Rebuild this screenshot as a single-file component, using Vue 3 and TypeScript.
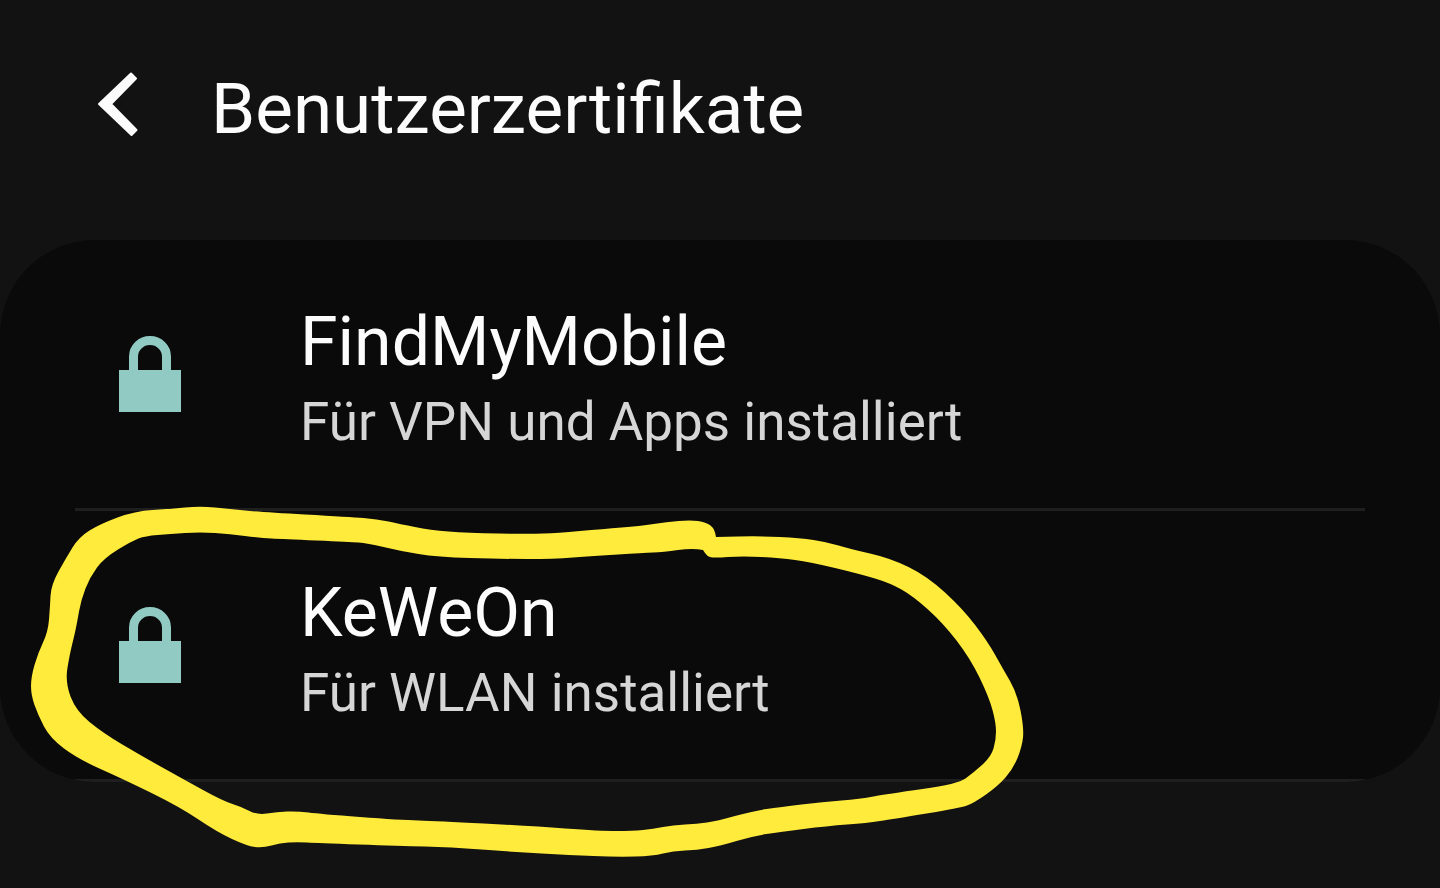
<script setup lang="ts">
type Point = [number, number]

interface Certificate {
  name: string
  usage: string
}

const certificates: Certificate[] = [
  { name: 'FindMyMobile', usage: 'Für VPN und Apps installiert' },
  { name: 'KeWeOn', usage: 'Für WLAN installiert' },
]

// Outer edge of the marker stroke; starts and ends where the stroke overlaps itself.
const outerEdge: Point[] = [
  [716, 537], [715, 529], [706, 522], [690, 520], [667, 522], [640, 526], [603, 529], [557, 533],
  [530, 534], [467, 533], [430, 530], [400, 524], [377, 519], [350, 517], [260, 512], [230, 509],
  [200, 506], [170, 509], [135, 511], [100, 524], [79, 537], [66, 558], [51, 585], [50, 607],
  [48, 632], [38, 653], [31, 677], [31, 695], [38, 715], [50, 738], [78, 759], [123, 779],
  [180, 807], [217, 832], [247, 846], [263, 848], [280, 843], [297, 842], [317, 843], [400, 846],
  [450, 847], [513, 852], [570, 855], [617, 857], [653, 856], [673, 851], [697, 850], [720, 846],
  [753, 836], [780, 832], [827, 826], [867, 823], [893, 819], [960, 808], [974, 803], [998, 786],
  [1013, 769], [1022, 747], [1024, 728], [1017, 693], [1003, 669], [988, 642], [963, 609],
  [927, 576], [890, 558], [850, 549], [827, 542], [800, 538], [760, 536], [716, 537],
]

const innerEdge: Point[] = [
  [703, 550], [693, 548], [663, 552], [643, 553], [593, 556], [553, 559], [503, 559], [437, 557],
  [400, 551], [367, 543], [350, 542], [283, 539], [260, 538], [230, 534], [200, 532], [170, 534],
  [145, 536], [132, 541], [104, 558], [90, 577], [81, 600], [77, 623], [74, 637], [70, 653],
  [65, 682], [76, 711], [103, 733], [140, 755], [183, 779], [223, 801], [242, 807], [257, 815],
  [277, 812], [297, 811], [320, 814], [400, 820], [437, 821], [530, 826], [600, 831], [633, 831],
  [653, 829], [673, 825], [697, 824], [717, 821], [753, 811], [780, 807], [823, 802], [860, 799],
  [887, 794], [958, 784], [973, 773], [991, 757], [996, 740], [996, 723], [989, 697], [970, 658],
  [943, 623], [913, 596], [890, 583], [860, 574], [810, 562], [780, 558], [743, 556], [713, 558],
  [707, 556], [703, 550],
]

// Rounds a closed outline: each inner point steers a curve between its neighbouring midpoints.
function smooth(points: Point[]): string {
  let d = `M${points[0][0]} ${points[0][1]}`
  for (let i = 1; i < points.length - 1; i++) {
    const [x, y] = points[i]
    const [nx, ny] = points[i + 1]
    d += `Q${x} ${y} ${(x + nx) / 2} ${(y + ny) / 2}`
  }
  return d + 'Z'
}

const markerPath = smooth(outerEdge) + smooth(innerEdge)
</script>

<template>
  <main class="screen">
    <header class="bar">
      <button class="back" type="button" aria-label="Zurück">
        <svg viewBox="0 0 84 84" aria-hidden="true">
          <path d="M24 37 56 6.500 61 11.500 36 37 61.500 63 56.500 68Z" />
        </svg>
      </button>
      <h1 class="title">Benutzerzertifikate</h1>
    </header>

    <section class="content">
      <ul class="card">
        <li v-for="cert in certificates" :key="cert.name" class="row">
          <svg class="lock" viewBox="0 0 150 160" aria-hidden="true">
            <path class="shackle" d="M58.500 70V54.500a16.500 16 0 0 1 33 0V70" />
            <path class="body" d="M44 68h62v42H44z" />
          </svg>
          <div class="text">
            <h2 class="name">{{ cert.name }}</h2>
            <p class="usage">{{ cert.usage }}</p>
          </div>
        </li>
      </ul>
      <svg class="marker" viewBox="0 500 1040 360" aria-hidden="true">
        <path :d="markerPath" fill-rule="evenodd" />
      </svg>
    </section>
  </main>
</template>

<style>
body {
  margin: 0;
  background: #121212;
}
</style>

<style scoped>
.screen {
  min-height: 100vh;
  background: #121212;
  color: #fcfcfc;
  font-family: Roboto, "Liberation Sans", sans-serif;
}

.bar {
  display: flex;
  align-items: center;
  gap: 52px;
  padding: 67px 75px 89px;
}

.back {
  width: 84px;
  height: 84px;
  padding: 0;
  border: 0;
  background: none;
  cursor: pointer;
}

.back svg {
  display: block;
  width: 84px;
  height: 84px;
  fill: #fcfcfc;
  stroke: #fcfcfc;
  stroke-width: 2;
  stroke-linejoin: round;
}

.title {
  margin: 0;
  font-size: 71px;
  font-weight: 400;
  line-height: 84px;
}

.content {
  position: relative;
}

.card {
  margin: 0;
  padding: 0 75px;
  overflow: hidden;
  border-radius: 95px;
  background: #0a0a0a;
  list-style: none;
}

.row {
  display: flex;
  align-items: center;
  gap: 75px;
  padding: 62px 0 46px;
  border-bottom: 3px solid #1f1f1f;
}

.lock {
  flex: none;
  width: 150px;
  height: 160px;
}

.shackle {
  fill: none;
  stroke: #91c9c3;
  stroke-width: 9;
}

.body {
  fill: #91c9c3;
}

.name,
.usage {
  margin: 0;
  font-weight: 400;
  line-height: 80px;
}

.name {
  font-size: 68px;
}

.usage {
  color: #d6d6d6;
  font-size: 53px;
}

.marker {
  position: absolute;
  top: 260px;
  left: 0;
  width: 1040px;
  height: 360px;
  fill: #ffeb3b;
  pointer-events: none;
}
</style>
